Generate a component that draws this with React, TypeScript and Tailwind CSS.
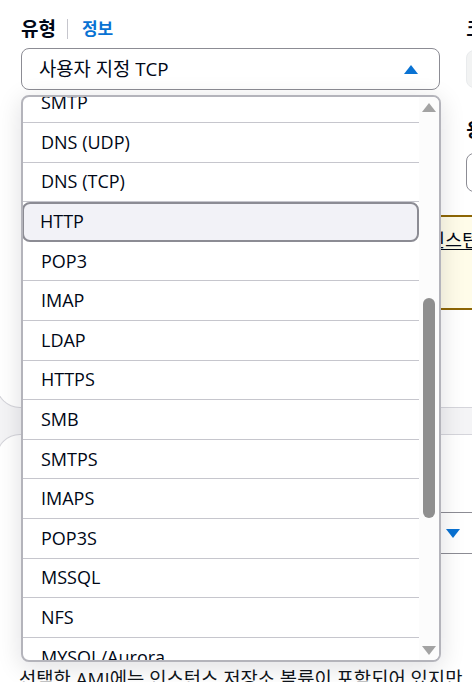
import React from 'react';

const OPTIONS = [
  'SMTP',
  'DNS (UDP)',
  'DNS (TCP)',
  'HTTP',
  'POP3',
  'IMAP',
  'LDAP',
  'HTTPS',
  'SMB',
  'SMTPS',
  'IMAPS',
  'POP3S',
  'MSSQL',
  'NFS',
  'MYSQL/Aurora',
  'Elastic Graphics',
];

const FONT = { fontFamily: '"Open Sans", "Noto Sans CJK KR", sans-serif' };

function Caret({ up, color }: { up?: boolean; color: string }) {
  return (
    <svg width="14" height="9" viewBox="0 0 14 9">
      {up ? <path d="M7 0 L14 9 L0 9 Z" fill={color} /> : <path d="M0 0 L14 0 L7 9 Z" fill={color} />}
    </svg>
  );
}

function Dropdown() {
  return (
    <div className="absolute left-[21px] top-[95px] w-[420px] h-[567px] rounded-[8px] border-2 border-[#b4b4bb] bg-white shadow-[0_5px_25px_1px_rgba(0,7,22,0.12)] overflow-hidden flex">
      <div className="flex-1 overflow-hidden">
        <ul className="mt-[-13.6px]">
          {OPTIONS.map((o) =>
            o === 'HTTP' ? (
              <li
                key={o}
                className="h-[39.6px] -ml-[1px] flex items-center pl-[16px] rounded-[8px] border-2 border-[#8c8c94] bg-[#f2f2f7] text-[18px] text-[#000716]"
              >
                {o}
              </li>
            ) : (
              <li
                key={o}
                className="h-[39.6px] flex items-center pl-[18px] border-b border-[#c6c6cd] text-[18px] text-[#000716]"
              >
                {o}
              </li>
            )
          )}
        </ul>
      </div>
      <div className="w-[20px] flex flex-col bg-[#fcfcfc]">
        <div className="h-[20px] flex items-center justify-center">
          <Caret up color="#a3a3a3" />
        </div>
        <div className="flex-1 flex justify-center">
          <div className="mt-[181px] w-[12px] h-[220px] rounded-full bg-[#8f8f8f]" />
        </div>
        <div className="h-[20px] flex items-center justify-center">
          <Caret color="#a3a3a3" />
        </div>
      </div>
    </div>
  );
}

export default function App() {
  return (
    <div className="relative w-[472px] h-[682px] overflow-hidden bg-[#f4f4f6]" style={FONT}>
      <div className="w-[600px] -ml-[4px]">
        {/* card 1 */}
        <div className="h-[408px] bg-white rounded-bl-[24px] border-b border-l border-[#d5d5db] pl-[24px] pt-[18px]">
          <div className="flex">
            <div className="w-[420px]">
              <div className="h-[22px] flex items-center">
                <span className="text-[19px] font-bold text-[#000716]">유형</span>
                <span className="ml-[11px] w-px h-[20px] bg-[#c6c6cd]" />
                <span className="ml-[14px] text-[17px] font-bold text-[#0972d3]">정보</span>
              </div>
              <div className="mt-[8px] h-[42px] rounded-[8px] border border-[#8c8c94] bg-white flex items-center justify-between pl-[17px] pr-[21px]">
                <span className="text-[18.8px] text-[#000716]">사용자 지정 TCP</span>
                <Caret up color="#0972d3" />
              </div>
            </div>
            <div className="ml-[26px] w-[130px]">
              <div className="h-[22px] flex items-center">
                <span className="text-[19px] font-bold text-[#000716]">크기 (GiB)</span>
              </div>
              <div className="mt-[10px] h-[38px] rounded-[8px] border border-[#e9ebed] bg-[#f2f3f3]" />
              <div className="mt-[31px] h-[22px] flex items-center">
                <span className="text-[19px] font-bold text-[#000716]">용량</span>
              </div>
              <div className="mt-[12px] h-[39px] rounded-[8px] border border-[#8c8c94] bg-white" />
            </div>
          </div>
          <div className="mt-[23px] h-[95px] border-y-2 border-[#8d6605] bg-[#fffce9] pt-[11px] flex">
            <span className="w-[407px] overflow-hidden whitespace-nowrap text-[18.5px] text-[#000716] pl-[16px]">
              선택한 AMI에 대해 규칙을 추가하려면 먼저
            </span>
            <span className="text-[18.5px] leading-[24px] text-[#000716] underline underline-offset-2">인스턴스 유형</span>
          </div>
        </div>
        {/* card 2 */}
        <div className="mt-[26px] h-[300px] bg-white rounded-tl-[24px] border-t border-l border-[#d5d5db] pl-[25px]">
          <div className="mt-[77px] ml-[279px] w-[180px] h-[42px] rounded-[8px] border border-[#8c8c94] flex items-center justify-end pr-[20px]">
            <Caret color="#0972d3" />
          </div>
          <p className="mt-[113px] -ml-[3px] text-[18.8px] leading-[24px] text-[#0f141a] whitespace-nowrap">
            선택한 AMI에는 인스턴스 저장소 볼륨이 포함되어 있지만
          </p>
        </div>
      </div>
      <Dropdown />
    </div>
  );
}
